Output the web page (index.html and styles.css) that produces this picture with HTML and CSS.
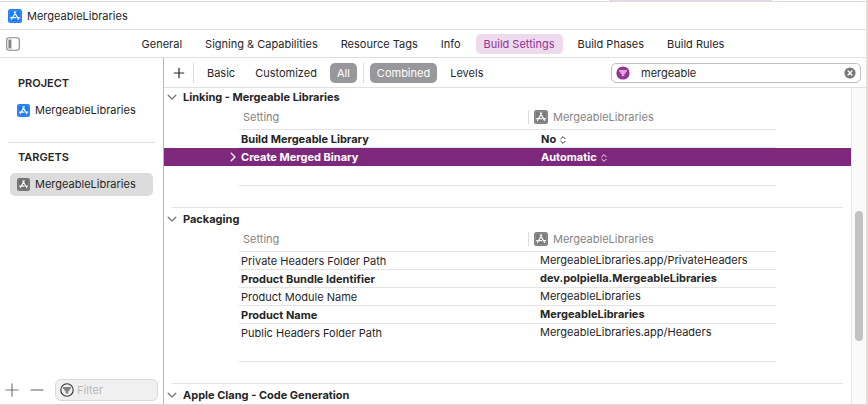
FILE: index.html
```html
<!DOCTYPE html>
<html lang="en">
<head>
<meta charset="utf-8">
<meta name="viewport" content="width=device-width, initial-scale=1">
<title>MergeableLibraries</title>
<link rel="stylesheet" href="styles.css">
</head>
<body>
<svg class="defs" aria-hidden="true">
  <symbol id="app" viewBox="0 0 14 14">
    <rect width="14" height="14" rx="2.5" fill="currentColor"/>
    <rect x="1.2" y="1.2" width="11.6" height="11.6" rx="1.6" fill="none" stroke="#fff" stroke-opacity=".3" stroke-width=".6"/>
    <path d="M7.8 3 4.6 8.5M6.3 3l4.2 7.4M2.7 8.7h5M9.5 8.7h2M3.9 9.8l-.4.7" fill="none" stroke="#fff" stroke-width="1.2" stroke-linecap="round"/>
  </symbol>
  <symbol id="down" viewBox="0 0 10 10"><path d="M1.2 3.2 5 7l3.8-3.8" fill="none" stroke="currentColor" stroke-width="1.3" stroke-linecap="round" stroke-linejoin="round"/></symbol>
  <symbol id="updown" viewBox="0 0 6 10"><path d="M.8 3.8 3 1.6l2.2 2.2M.8 6.2 3 8.4l2.2-2.2" fill="none" stroke="currentColor" stroke-width=".9" stroke-linecap="round" stroke-linejoin="round"/></symbol>
</svg>
<div class="window">
  <div class="strip"><span class="strip-mark"></span></div>
  <header class="title"><svg class="app blue"><use href="#app"/></svg><h1>MergeableLibraries</h1></header>
  <nav class="tabs">
    <button class="panel-toggle" aria-label="Toggle sidebar"><svg viewBox="0 0 14 14"><rect x=".7" y=".7" width="12.6" height="12.6" rx="2.2" fill="none" stroke="#858585" stroke-width="1.1"/><rect x="2.4" y="2.6" width="3" height="8.8" rx=".5" fill="#858585"/></svg></button>
    <button class="tab">General</button>
    <button class="tab">Signing &amp; Capabilities</button>
    <button class="tab">Resource Tags</button>
    <button class="tab">Info</button>
    <button class="tab current">Build Settings</button>
    <button class="tab">Build Phases</button>
    <button class="tab">Build Rules</button>
  </nav>
  <div class="main">
    <aside class="sidebar">
      <h2>PROJECT</h2>
      <a class="item" href="#"><svg class="app blue"><use href="#app"/></svg>MergeableLibraries</a>
      <hr>
      <h2>TARGETS</h2>
      <a class="item selected" href="#"><svg class="app dark"><use href="#app"/></svg>MergeableLibraries</a>
      <div class="side-foot">
        <button aria-label="Add"><svg class="sign" viewBox="0 0 14 14"><path d="M7 .5v13M.5 7h13"/></svg></button>
        <button aria-label="Remove"><svg class="sign" viewBox="0 0 14 14"><path d="M.5 7h13"/></svg></button>
        <label class="filter">
          <svg viewBox="0 0 14 14"><circle cx="7" cy="7" r="6.2" fill="none" stroke="#333" stroke-width="1.1"/><path d="M3 3.9h8v1.9H9.7v2H8.3v2.6H5.7V7.8H4.3v-2H3z" fill="#808080"/></svg>
          <input type="text" placeholder="Filter" aria-label="Filter">
        </label>
      </div>
    </aside>
    <section class="content">
      <div class="toolbar">
        <button class="add" aria-label="Add setting"><svg viewBox="0 0 12 12"><path d="M6 .8v10.4M.8 6h10.4"/></svg></button>
        <span class="rule"></span>
        <button class="scope">Basic</button>
        <button class="scope">Customized</button>
        <button class="scope on">All</button>
        <span class="rule"></span>
        <button class="scope on">Combined</button>
        <button class="scope">Levels</button>
        <label class="search">
          <svg viewBox="0 0 14 14"><circle cx="7" cy="7" r="6.6" fill="#963296"/><path d="M3 3.9h8v1.9H9.7v2H8.3v2.4H5.7V7.8H4.3v-2H3z" fill="#d6a9d8"/></svg>
          <input type="text" value="mergeable" aria-label="Search settings">
          <button class="clear" aria-label="Clear"><svg viewBox="0 0 12 12"><circle cx="6" cy="6" r="5.6" fill="#777"/><path d="m4.1 4.1 3.8 3.8m0-3.8L4.1 7.9" stroke="#fff" stroke-width="1.4" stroke-linecap="round"/></svg></button>
        </label>
      </div>
      <div class="scroller">
        <div class="list">
          <section class="group">
            <h3><svg><use href="#down"/></svg>Linking - Mergeable Libraries</h3>
            <table>
              <thead><tr><td class="gutter"></td><th class="name">Setting</th><th class="value"><span class="target"><svg class="app gray"><use href="#app"/></svg>MergeableLibraries</span></th><td class="gutter"></td></tr></thead>
              <tbody>
                <tr class="set"><td class="gutter"></td><td>Build Mergeable Library</td><td><button class="popup">No<svg><use href="#updown"/></svg></button></td><td class="gutter"></td></tr>
                <tr class="set active"><td class="gutter"><button class="expand" aria-label="Expand"><svg><use href="#down"/></svg></button></td><td>Create Merged Binary</td><td><button class="popup">Automatic<svg><use href="#updown"/></svg></button></td><td class="gutter"></td></tr>
                <tr class="tail"><td class="gutter"></td><td></td><td></td><td class="gutter"></td></tr>
              </tbody>
            </table>
          </section>
          <section class="group">
            <h3><svg><use href="#down"/></svg>Packaging</h3>
            <table>
              <thead><tr><td class="gutter"></td><th class="name">Setting</th><th class="value"><span class="target"><svg class="app gray"><use href="#app"/></svg>MergeableLibraries</span></th><td class="gutter"></td></tr></thead>
              <tbody>
                <tr><td class="gutter"></td><td>Private Headers Folder Path</td><td>MergeableLibraries.app/PrivateHeaders</td><td class="gutter"></td></tr>
                <tr class="set"><td class="gutter"></td><td>Product Bundle Identifier</td><td>dev.polpiella.MergeableLibraries</td><td class="gutter"></td></tr>
                <tr><td class="gutter"></td><td>Product Module Name</td><td>MergeableLibraries</td><td class="gutter"></td></tr>
                <tr class="set"><td class="gutter"></td><td>Product Name</td><td>MergeableLibraries</td><td class="gutter"></td></tr>
                <tr class="last"><td class="gutter"></td><td>Public Headers Folder Path</td><td>MergeableLibraries.app/Headers</td><td class="gutter"></td></tr>
                <tr class="tail"><td class="gutter"></td><td></td><td></td><td class="gutter"></td></tr>
              </tbody>
            </table>
          </section>
          <section class="group">
            <h3><svg><use href="#down"/></svg>Apple Clang - Code Generation</h3>
          </section>
        </div>
        <div class="track"><span class="thumb"></span></div>
      </div>
    </section>
  </div>
</div>
</body>
</html>
```
FILE: styles.css
```css
* { box-sizing: border-box; }
body {
  margin: 0;
  background: #fff;
  color: #262626;
  font: 11px/18px Inter, "Liberation Sans", sans-serif;
}
h1, h2, h3 { margin: 0; font-size: 11px; }
button, input { font: inherit; color: inherit; }
button { display: inline-flex; align-items: center; border: 0; padding: 0; background: none; }
svg { display: block; flex: none; }
.defs { position: absolute; width: 0; height: 0; }

.window {
  display: flex;
  flex-direction: column;
  height: 100vh;
  border-right: 2px solid #e4dedb;
  border-bottom: 1px solid #d9d9d9;
}
.strip { display: flex; justify-content: flex-end; height: 2px; padding-right: 94px; border-bottom: 1px solid #dcdcdc; }
.strip-mark { width: 163px; background: #e8d6e9; }

.app { width: 14px; height: 14px; }
.blue { color: #1a7cf5; }
.dark { color: #6b6b6b; }
.gray { color: #7b7b7b; }

.title {
  display: flex;
  align-items: center;
  gap: 5px;
  height: 28px;
  padding-left: 8px;
  border-bottom: 1px solid #e0e0e0;
}
.title h1 { font-weight: 400; }

.tabs {
  position: relative;
  display: flex;
  justify-content: center;
  align-items: center;
  gap: 7px;
  height: 28px;
  border-bottom: 1px solid #e0e0e0;
}
.panel-toggle { position: absolute; left: 6px; top: 7px; }
.panel-toggle svg { width: 14px; height: 14px; }
.tab { height: 20px; padding: 0 8px; border-radius: 5px; }
.tab.current { background: #eddbed; color: #963296; }

.main { display: flex; flex: 1; min-height: 0; }

.sidebar {
  display: flex;
  flex-direction: column;
  width: 164px;
  padding: 16px 0 3px;
  border-right: 1px solid #b8b8b8;
}
.sidebar h2 { padding-left: 18px; font-weight: 600; }
.item {
  display: flex;
  align-items: center;
  gap: 5px;
  height: 23px;
  margin: 7px 10px 0 10px;
  padding-left: 7px;
  border-radius: 5px;
  line-height: 17px;
  color: inherit;
  text-decoration: none;
}
.item .app { width: 13px; height: 13px; }
.item.selected { background: #dcdcdc; }
.sidebar hr { width: auto; margin: 20px 8px 5px; border: 0; border-top: 1px solid #e0e0e0; }
.side-foot { display: flex; align-items: center; gap: 11px; margin-top: auto; padding: 0 5px; }
.sign { width: 14px; height: 14px; fill: none; stroke: #777; stroke-width: 1.2; }
.filter {
  display: flex;
  flex: 1;
  align-items: center;
  gap: 3px;
  min-width: 0;
  height: 22px;
  padding: 0 4px;
  border: 1px solid #dadada;
  border-radius: 6px;
  background: #f0f0f0;
}
.filter svg { width: 14px; height: 14px; }
.filter input, .search input { flex: 1; min-width: 0; width: 0; padding: 0; border: 0; outline: 0; background: none; }
.filter input::placeholder { color: #b8b8b8; opacity: 1; }

.content { display: flex; flex: 1; flex-direction: column; min-width: 0; }
.toolbar {
  display: flex;
  align-items: center;
  gap: 6px;
  height: 30px;
  padding: 0 5px 0 9px;
  border-bottom: 1px solid #e0e0e0;
}
.add { margin-right: 2px; }
.add svg { width: 12px; height: 12px; fill: none; stroke: #262626; stroke-width: 1.2; }
.rule { width: 1px; height: 20px; background: #dcdcdc; }
.scope { height: 20px; padding: 0 7px; border-radius: 5px; }
.scope.on { background: #98979c; color: #fff; }
.search {
  display: flex;
  align-items: center;
  gap: 11px;
  width: 250px;
  height: 20px;
  margin-left: auto;
  padding: 0 4px;
  border: 1px solid #bfbfbf;
  border-radius: 5px;
}
.search svg { width: 14px; height: 14px; }
.search .clear svg { width: 12px; height: 12px; }

.scroller { display: flex; flex: 1; min-height: 0; }
.list { flex: 1; min-width: 0; overflow: hidden; }
.group h3 { display: flex; align-items: center; gap: 6px; margin-bottom: 2px; padding-left: 3px; font-weight: 700; }
.group h3 svg { width: 10px; height: 10px; color: #777; }
.group + .group { margin-top: 21px; }
.group + .group::before { content: ""; display: block; margin: 0 8px 2px; border-top: 1px solid #e4e4e4; }

table { width: 100%; table-layout: fixed; border-collapse: separate; border-spacing: 0; }
th, td { height: 18px; padding: 0 0 0 2px; line-height: 17px; text-align: left; border-bottom: 1px solid #e4e4e4; white-space: nowrap; }
td:nth-child(2) { padding-top: 2px; line-height: 15px; }
td:nth-child(3) { padding-left: 12px; }
.gutter, td.gutter:last-child { width: 75px; padding: 0; border: 0; }
th { height: 22px; padding: 0 0 3px 4px; color: #858585; font-weight: 400; }
th.value { width: 248px; padding-left: 0; }
.target { display: flex; align-items: center; gap: 5px; padding-left: 5px; height: 14px; border-left: 1px solid #dcdcdc; }
.set td { font-weight: 700; }
.popup { gap: 4px; height: 17px; padding: 2px 0 0 1px; line-height: 15px; vertical-align: top; }
.popup svg { width: 6px; height: 10px; }
.active td { background: #7d287d; color: #fff; border-color: #7d287d; }
.expand { display: flex; height: 17px; margin-left: auto; padding-right: 1px; }
.expand svg { width: 10px; height: 10px; transform: rotate(-90deg); }
.last td { border-color: transparent; }
.tail td { height: 20px; }

.track { position: relative; width: 15px; border-left: 1px solid #e6e6e6; background: #fafafa; }
.thumb { position: absolute; top: 39%; left: 3px; width: 8px; height: 41%; border-radius: 4px; background: #c2c2c2; }
```
